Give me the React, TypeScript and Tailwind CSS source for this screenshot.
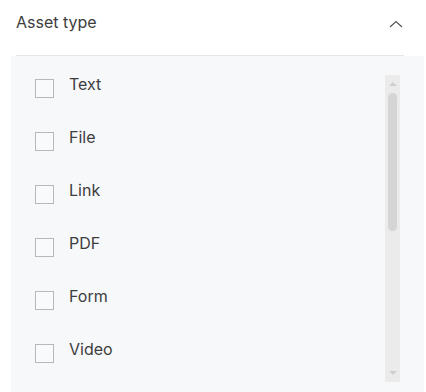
const items = ["Text", "File", "Link", "PDF", "Form", "Video"];

const App = () => {
  return (
    <div className="w-[426px] h-[392px] overflow-hidden bg-white font-['Inter',sans-serif] text-[#3d3d3d]">
      {/* Header */}
      <div className="ml-4 mr-[22px] h-[56px] flex items-center justify-between border-b border-[#e6e6e6]">
        <span className="text-[16px] -mt-[12px]">Asset type</span>
        <svg width="14" height="8" viewBox="0 0 14 8" className="-mt-[8px] mr-[1px]">
          <path d="M1 7 L7 1.5 L13 7" fill="none" stroke="#555" strokeWidth="1.2" />
        </svg>
      </div>

      {/* Options panel */}
      <div className="ml-[11px] mr-[2px] h-[336px] bg-[#f7f8fa] flex">
        <div className="flex-1 pt-[23px] pl-6">
          {items.map((item) => (
            <div key={item} className="h-[53px] flex items-start gap-[15px]">
              <div className="w-[19px] h-[19px] border border-[#b8b8b8] bg-[#f9fafb]" />
              <span className="text-[16px] -mt-[7px]">{item}</span>
            </div>
          ))}
        </div>
        {/* Scrollbar */}
        <div className="w-[15px] mt-[19px] mb-[10px] mr-6 bg-[#ebebeb] flex flex-col items-center">
          <div className="h-[18px] flex items-center justify-center">
            <div className="w-0 h-0 border-l-[4px] border-r-[4px] border-b-[4px] border-l-transparent border-r-transparent border-b-[#cfcfcf]" />
          </div>
          <div className="w-[9px] h-[138px] rounded-full bg-[#d5d5d5]" />
          <div className="flex-1" />
          <div className="h-[18px] flex items-center justify-center">
            <div className="w-0 h-0 border-l-[4px] border-r-[4px] border-t-[4px] border-l-transparent border-r-transparent border-t-[#cfcfcf]" />
          </div>
        </div>
      </div>
    </div>
  );
};

export default App;
